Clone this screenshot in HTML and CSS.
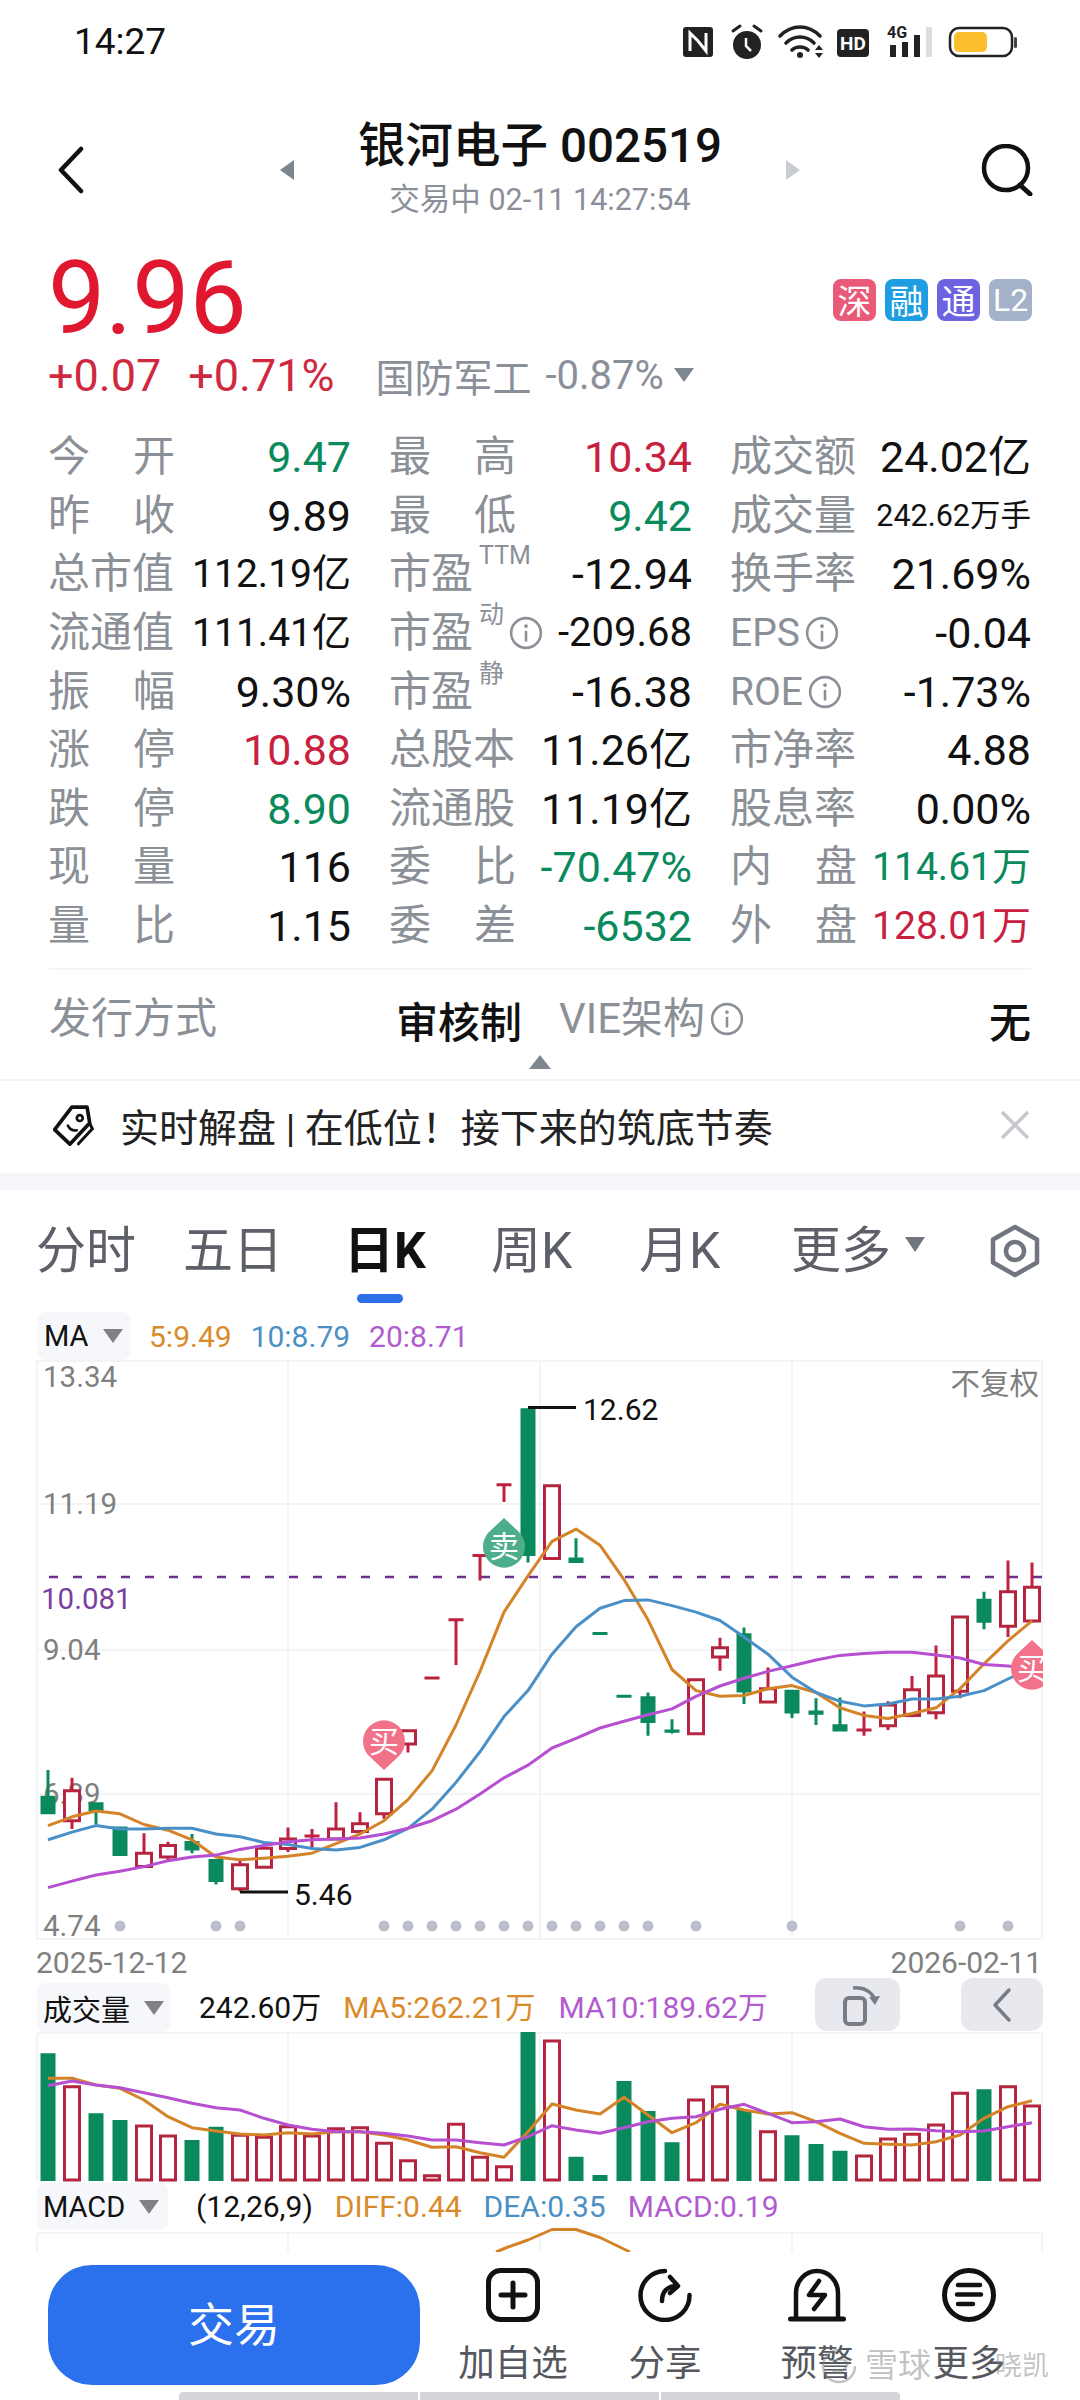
FILE: index.html
```html
<!DOCTYPE html>
<html lang="zh-CN">
<head>
  <meta charset="UTF-8">
  <title>银河电子 002519</title>
  <link rel="stylesheet" href="styles.css">
</head>
<body>
  <svg class="defs" width="0" height="0">
    <symbol id="info" viewBox="0 0 32 32">
      <circle cx="16" cy="16" r="14" fill="none" stroke="currentColor" stroke-width="2.4"/>
      <circle cx="16" cy="9.5" r="1.8" fill="currentColor"/>
      <path d="M16 14v10" stroke="currentColor" stroke-width="2.4"/>
    </symbol>
  </svg>

  <div class="status">
    <span class="status-time">14:27</span>
    <svg class="status-icons" viewBox="683 22 335 40" width="335" height="40">
      <rect x="683" y="27" width="30" height="30" rx="3" fill="#222"/>
      <path d="M690 51V33l8 8 8 10V33" fill="none" stroke="#fff" stroke-width="3"/>
      <circle cx="747" cy="45" r="14" fill="#222"/>
      <path d="M733 31l7-5M761 31l-7-5" stroke="#222" stroke-width="3" stroke-linecap="round"/>
      <path d="M746 38v8l5 5" fill="none" stroke="#fff" stroke-width="2.5"/>
      <path d="M780 36c12-12 28-12 40 0M786 43c8-8 20-8 28 0M792 50c4-4 12-4 16 0" fill="none" stroke="#222" stroke-width="3.6" stroke-linecap="round"/>
      <circle cx="800" cy="55" r="3" fill="#222"/>
      <path d="M815 50l4-5 4 5zM815 53h8l-4 5z" fill="#222"/>
      <rect x="837" y="29" width="32" height="28" rx="4" fill="#222"/>
      <text class="status-hd" x="853" y="50" text-anchor="middle">HD</text>
      <text class="status-4g" x="887" y="38">4G</text>
      <path d="M890 45h6v12h-6zM902 42h6v15h-6zM914 35h6v22h-6z" fill="#222"/>
      <rect x="926" y="27" width="6" height="30" fill="#ddd"/>
      <rect x="950" y="28" width="62" height="28" rx="9" fill="none" stroke="#222" stroke-width="2.5"/>
      <rect x="954" y="32" width="33" height="20" rx="5" fill="#fbbf2d"/>
      <rect x="1014" y="37" width="3" height="11" rx="1.5" fill="#444"/>
    </svg>
  </div>

  <div class="nav">
    <svg class="nav-back" viewBox="0 0 27 48" width="27" height="48">
      <path d="M24 3L4 24l20 21" fill="none" stroke="#111" stroke-width="4.5" stroke-linecap="round" stroke-linejoin="round"/>
    </svg>
    <div class="nav-center">
      <span class="tri-left"></span>
      <div class="nav-title">
        <div class="title">银河电子 002519</div>
        <div class="subtitle">交易中 02-11 14:27:54</div>
      </div>
      <span class="tri-right"></span>
    </div>
    <svg class="nav-search" viewBox="0 0 54 52" width="54" height="52">
      <circle cx="26" cy="24" r="22" fill="none" stroke="#111" stroke-width="4.5"/>
      <path d="M40 41l10 9" stroke="#111" stroke-width="5" stroke-linecap="round"/>
    </svg>
  </div>

  <div class="quote">
    <div class="price">9.96</div>
    <div class="tags">
      <span class="tag tag-shen">深</span>
      <span class="tag tag-rong">融</span>
      <span class="tag tag-tong">通</span>
      <span class="tag tag-l2">L2</span>
    </div>
  </div>
  <div class="change">
    <span class="change-num">+0.07</span>
    <span class="change-num">+0.71%</span>
    <span class="sector">国防军工</span>
    <span class="sector-pct">-0.87%</span>
    <span class="sector-tri"></span>
  </div>

  <div class="stats">
    <div class="cell"><span class="lbl lbl-just">今 开</span><span class="val green">9.47</span></div>
    <div class="cell"><span class="lbl lbl-just">最 高</span><span class="val red">10.34</span></div>
    <div class="cell"><span class="lbl">成交额</span><span class="val">24.02亿</span></div>

    <div class="cell"><span class="lbl lbl-just">昨 收</span><span class="val">9.89</span></div>
    <div class="cell"><span class="lbl lbl-just">最 低</span><span class="val green">9.42</span></div>
    <div class="cell"><span class="lbl">成交量</span><span class="val val-xs">242.62万手</span></div>

    <div class="cell"><span class="lbl">总市值</span><span class="val val-sm">112.19亿</span></div>
    <div class="cell"><span class="lbl">市盈<sup>TTM</sup></span><span class="val">-12.94</span></div>
    <div class="cell"><span class="lbl">换手率</span><span class="val">21.69%</span></div>

    <div class="cell"><span class="lbl">流通值</span><span class="val val-sm">111.41亿</span></div>
    <div class="cell"><span class="lbl">市盈<sup>动</sup></span><svg class="info"><use href="#info"/></svg><span class="val val-md">-209.68</span></div>
    <div class="cell"><span class="lbl lbl-en">EPS</span><svg class="info"><use href="#info"/></svg><span class="val">-0.04</span></div>

    <div class="cell"><span class="lbl lbl-just">振 幅</span><span class="val">9.30%</span></div>
    <div class="cell"><span class="lbl">市盈<sup>静</sup></span><span class="val">-16.38</span></div>
    <div class="cell"><span class="lbl lbl-en">ROE</span><svg class="info"><use href="#info"/></svg><span class="val">-1.73%</span></div>

    <div class="cell"><span class="lbl lbl-just">涨 停</span><span class="val red">10.88</span></div>
    <div class="cell"><span class="lbl">总股本</span><span class="val">11.26亿</span></div>
    <div class="cell"><span class="lbl">市净率</span><span class="val">4.88</span></div>

    <div class="cell"><span class="lbl lbl-just">跌 停</span><span class="val green">8.90</span></div>
    <div class="cell"><span class="lbl">流通股</span><span class="val">11.19亿</span></div>
    <div class="cell"><span class="lbl">股息率</span><span class="val">0.00%</span></div>

    <div class="cell"><span class="lbl lbl-just">现 量</span><span class="val">116</span></div>
    <div class="cell"><span class="lbl lbl-just">委 比</span><span class="val green">-70.47%</span></div>
    <div class="cell"><span class="lbl lbl-just">内 盘</span><span class="val val-sm green">114.61万</span></div>

    <div class="cell"><span class="lbl lbl-just">量 比</span><span class="val">1.15</span></div>
    <div class="cell"><span class="lbl lbl-just">委 差</span><span class="val green">-6532</span></div>
    <div class="cell"><span class="lbl lbl-just">外 盘</span><span class="val val-sm red">128.01万</span></div>
  </div>

  <div class="issue">
    <div class="issue-row">
      <span class="lbl issue-name">发行方式</span>
      <span class="issue-val">审核制</span>
      <span class="lbl issue-vie">VIE架构</span>
      <svg class="info"><use href="#info"/></svg>
      <span class="issue-val issue-none">无</span>
    </div>
    <span class="issue-arrow"></span>
  </div>

  <div class="news">
    <svg class="news-icon" viewBox="60 40 130 135" width="43" height="45">
      <path d="M120 52h46l8 48-60 64-46-44z" fill="none" stroke="#111" stroke-width="11" stroke-linejoin="round"/>
      <path d="M176 105l6 12-42 46" fill="none" stroke="#111" stroke-width="9" stroke-linecap="round"/>
      <circle cx="144" cy="85" r="9" fill="none" stroke="#111" stroke-width="8"/>
      <path d="M108 108c6 12 16 16 27 14" fill="none" stroke="#111" stroke-width="8" stroke-linecap="round"/>
    </svg>
    <span class="news-text">实时解盘 | 在低位！接下来的筑底节奏</span>
    <svg class="news-close" viewBox="0 0 30 30" width="30" height="30">
      <path d="M2 2l26 26M28 2L2 28" stroke="#c5c9cf" stroke-width="3.6"/>
    </svg>
  </div>

  <div class="tabs">
    <span class="tab">分时</span>
    <span class="tab">五日</span>
    <span class="tab tab-active">日K</span>
    <span class="tab">周K</span>
    <span class="tab">月K</span>
    <span class="tab tab-more">更多<i class="tab-tri"></i></span>
    <svg class="tab-gear" viewBox="0 0 52 54" width="52" height="54">
      <path d="M26 3l22 12.5v23L26 51 4 38.5v-23z" fill="none" stroke="#71757f" stroke-width="4.5" stroke-linejoin="round"/>
      <circle cx="26" cy="27" r="9" fill="none" stroke="#71757f" stroke-width="4.5"/>
    </svg>
  </div>

  <div class="legend legend-ma">
    <span class="chip chip-ma">MA<i class="chip-tri"></i></span>
    <span class="c-orange">5:9.49</span>
    <span class="c-blue">10:8.79</span>
    <span class="c-purple">20:8.71</span>
  </div>

  <svg class="chart" viewBox="0 1360 1080 580" width="1080" height="580">
    <defs><clipPath id="chart-clip"><rect x="37" y="1360" width="1006" height="580"/></clipPath></defs>
    <path class="grid" d="M37 1361H1042V1939H37ZM288 1361V1939M540 1361V1939M792 1361V1939M37 1504H1042M37 1650H1042M37 1794H1042"/>
    <text class="axis" x="43" y="1387">13.34</text>
    <text class="axis" x="43" y="1514">11.19</text>
    <text class="axis" x="43" y="1660">9.04</text>
    <text class="axis" x="43" y="1804">6.89</text>
    <text class="axis" x="43" y="1936">4.74</text>
    <text class="axis axis-avg" x="41" y="1609">10.081</text>
    <text class="axis" x="1039" y="1394" text-anchor="end">不复权</text>

    <path class="dash" d="M49 1577H1043"/>

    <path class="wick-g" d="M48 1770V1796M96 1811V1824.5M192 1834V1853.2M216 1881V1884.6M528 1555V1562.4M576 1538.3V1558M648 1692.5V1735.7M672 1719.3V1733.4M744 1627.4V1704M792 1713V1718.1M816 1698.2V1725M840 1697.4V1725M984 1591.8V1629.3M592.5 1633.5h15M616.5 1696.3h15"/>
    <path class="body-g" d="M40.5 1795.8h15v18.4h-15zM88.5 1802.3h15v8.7h-15zM112.5 1826.4h15v29.5h-15zM184.5 1840.9h15v9.6h-15zM208.5 1858.9h15v23h-15zM520.5 1408.2h15v147.7h-15zM568.5 1557.4h15v5.7h-15zM640.5 1696.3h15v26.8h-15zM664.5 1729.6h15v3.1h-15zM736.5 1633.2h15v59.3h-15zM784.5 1689.8h15v23.7h-15zM808.5 1710.5h15v4.2h-15zM832.5 1724.2h15v7.3h-15zM976.5 1598.7h15v24.1h-15z"/>
    <path class="wick-r" d="M72 1777.8V1829.1M144 1833.3V1853M168 1841.7V1860.8M240 1860.8V1891.5M288 1827.5V1852M312 1829.1V1847.4M336 1802.3V1839.8M360 1812.2V1832.9M384 1813.8V1818.7M408 1744V1752.6M456 1619.8V1664.9M480 1555.5V1580.4M504 1484.7V1501.9M720 1637.8V1670.7M768 1667.6V1689M864 1711.6V1735.7M888 1701.3V1730M912 1676V1717.3M936 1645.4V1719.3M960 1691V1698.2M1008 1560.5V1637M1032 1562.4V1622.4M304.5 1836h15M424.5 1677.9h15M448.5 1619.8h15M472.5 1555.5h15M496.5 1484.7h15M856.5 1730h15"/>
    <path class="body-r" d="M64.5 1790.8h15v29.9h-15zM136.5 1853.2h15v13.4h-15zM160.5 1845.5h15v11.5h-15zM232.5 1864.7h15v24.1h-15zM256.5 1848.2h15v19.1h-15zM280.5 1839h15v9.6h-15zM328.5 1829.1h15v9.9h-15zM352.5 1823.7h15v7.7h-15zM376.5 1779.3h15v34.5h-15zM400.5 1730.7h15v13.4h-15zM544.5 1485.8h15v72.7h-15zM688.5 1679.8h15v54h-15zM712.5 1647.7h15v9.2h-15zM760.5 1688.7h15v13.3h-15zM880.5 1705.1h15v20.7h-15zM904.5 1689.8h15v25.6h-15zM928.5 1676h15v36.8h-15zM952.5 1617.1h15v74.2h-15zM1000.5 1591.8h15v34.5h-15zM1024.5 1587.2h15v33.7h-15z"/>

    <polyline class="line-orange" points="48,1825.6 72,1816.8 96,1811 120,1813.8 144,1824.5 168,1830.2 192,1839.8 216,1857 240,1859.7 264,1858.2 288,1856.2 312,1853.2 336,1843.6 360,1834 384,1820.7 408,1799.6 432,1770.9 456,1725 480,1671.4 504,1612.1 528,1575.8 552,1541.3 576,1529.1 600,1545.2 624,1579.6 648,1619.8 672,1669.5 696,1690.6 720,1696.3 744,1695.5 768,1688.7 792,1685.6 816,1692.5 840,1707.8 864,1715.4 888,1718.5 912,1713.5 936,1707.8 960,1688.7 984,1663.8 1008,1640.8 1032,1620.9"/>
    <polyline class="line-blue" points="48,1839.8 72,1832.1 96,1825.6 120,1829.1 144,1829.1 168,1828.3 192,1828.3 216,1834 240,1836.7 264,1842.5 288,1844.4 312,1848.6 336,1850.1 360,1847.4 384,1839.8 408,1828.3 432,1809.2 456,1782.4 480,1751.8 504,1716.6 528,1690.6 552,1654.2 576,1626.7 600,1608.3 624,1600.6 648,1599.9 672,1605.6 696,1612.1 720,1620.5 744,1637 768,1654.2 792,1677.2 816,1692.5 840,1701.3 864,1705.9 888,1704 912,1699 936,1699 960,1696.3 984,1690.6 1008,1679 1032,1667.6"/>
    <polyline class="line-purple" points="48,1887.6 72,1881.1 96,1875 120,1871.2 144,1866.6 168,1860.8 192,1857 216,1855.1 240,1849.4 264,1845.5 288,1841.7 312,1839.8 336,1839 360,1837.9 384,1834 408,1828.3 432,1820.7 456,1809.2 480,1793.9 504,1777.8 528,1765.2 552,1748 576,1738.4 600,1728 624,1721.2 648,1714.7 672,1708.9 696,1696.3 720,1686 744,1678.3 768,1671.4 792,1665.7 816,1660 840,1655.4 864,1653.4 888,1652.3 912,1652.3 936,1655 960,1658 984,1664.5 1008,1666 1032,1668.4"/>

    <path class="mark-line" d="M528 1407.5H576M240 1892H288"/>
    <text class="mark-num" x="583" y="1420">12.62</text>
    <text class="mark-num" x="294" y="1905">5.46</text>

    <g class="dots">
      <circle cx="120" cy="1926" r="5.5"/><circle cx="216" cy="1926" r="5.5"/><circle cx="240" cy="1926" r="5.5"/>
      <circle cx="384" cy="1926" r="5.5"/><circle cx="408" cy="1926" r="5.5"/><circle cx="432" cy="1926" r="5.5"/>
      <circle cx="456" cy="1926" r="5.5"/><circle cx="480" cy="1926" r="5.5"/><circle cx="504" cy="1926" r="5.5"/>
      <circle cx="528" cy="1926" r="5.5"/><circle cx="552" cy="1926" r="5.5"/><circle cx="576" cy="1926" r="5.5"/>
      <circle cx="600" cy="1926" r="5.5"/><circle cx="624" cy="1926" r="5.5"/><circle cx="648" cy="1926" r="5.5"/>
      <circle cx="696" cy="1926" r="5.5"/><circle cx="792" cy="1926" r="5.5"/><circle cx="960" cy="1926" r="5.5"/>
      <circle cx="1008" cy="1926" r="5.5"/>
    </g>

    <path class="pin-buy" d="M384 1770l-15-14a21 21 0 1 1 30 0z"/>
    <text class="pin-text" x="384" y="1752">买</text>
    <path class="pin-sell" d="M504 1518l15 14a21 21 0 1 1-30 0z"/>
    <text class="pin-text" x="504" y="1557">卖</text>
    <g clip-path="url(#chart-clip)">
      <path class="pin-buy" d="M1032 1640l15 14a21 21 0 1 1-30 0z"/>
      <text class="pin-text" x="1032" y="1679">买</text>
    </g>
  </svg>

  <div class="dates"><span>2025-12-12</span><span>2026-02-11</span></div>

  <div class="legend legend-vol">
    <span class="chip chip-vol">成交量<i class="chip-tri"></i></span>
    <span class="vol-now">242.60万</span>
    <span class="c-orange vol-ma5">MA5:262.21万</span>
    <span class="c-purple">MA10:189.62万</span>
    <span class="side-btn side-rotate">
      <svg viewBox="0 0 44 44" width="44" height="44">
        <rect x="9" y="15" width="20" height="26" rx="4" fill="none" stroke="#7a7c85" stroke-width="4"/>
        <path d="M17 5c11-1 20 4 22 13" fill="none" stroke="#7a7c85" stroke-width="3.5"/>
        <path d="M33 14l6 8 5-9z" fill="#7a7c85"/>
      </svg>
    </span>
    <span class="side-btn side-fold">
      <svg viewBox="0 0 22 36" width="22" height="36">
        <path d="M18 3L4 18l14 15" fill="none" stroke="#7a7c85" stroke-width="3.5" stroke-linecap="round" stroke-linejoin="round"/>
      </svg>
    </span>
  </div>

  <svg class="chart" viewBox="0 2032 1080 149" width="1080" height="149">
    <path class="grid" d="M37 2033H1042M37 2033V2181M288 2033V2181M540 2033V2181M792 2033V2181M1042 2033V2181"/>
    <path class="body-g" d="M40.5 2053.3h15V2181h-15zM88.5 2113.3h15V2181h-15zM112.5 2120h15V2181h-15zM184.5 2140h15V2181h-15zM208.5 2126.7h15V2181h-15zM520.5 2032h15V2181h-15zM568.5 2156.7h15V2181h-15zM592.5 2175h15V2181h-15zM616.5 2081h15V2181h-15zM640.5 2111h15V2181h-15zM664.5 2142.3h15V2181h-15zM736.5 2110h15V2181h-15zM784.5 2135.3h15V2181h-15zM808.5 2144h15V2181h-15zM832.5 2150.7h15V2181h-15zM976.5 2089.3h15V2181h-15z"/>
    <path class="body-r" d="M64.5 2086.7h15V2180h-15zM136.5 2126h15V2180h-15zM160.5 2136h15V2180h-15zM232.5 2135.3h15V2180h-15zM256.5 2137.3h15V2180h-15zM280.5 2126.7h15V2180h-15zM304.5 2136h15V2180h-15zM328.5 2128.7h15V2180h-15zM352.5 2127.7h15V2180h-15zM376.5 2143.3h15V2180h-15zM400.5 2160.7h15V2180h-15zM424.5 2175.7h15V2180h-15zM448.5 2124.3h15V2180h-15zM472.5 2157.3h15V2180h-15zM496.5 2166.7h15V2180h-15zM544.5 2041h15V2180h-15zM688.5 2100h15V2180h-15zM712.5 2086.7h15V2180h-15zM760.5 2131.7h15V2180h-15zM856.5 2156h15V2180h-15zM880.5 2139h15V2180h-15zM904.5 2134.3h15V2180h-15zM928.5 2125h15V2180h-15zM952.5 2093.3h15V2180h-15zM1000.5 2086.7h15V2180h-15zM1024.5 2106h15V2180h-15z"/>
    <polyline class="line-orange" points="48,2078.3 72,2078.3 96,2085 120,2088.3 144,2100 168,2116.7 192,2127.7 216,2131 240,2134 264,2135 288,2132.7 312,2134 336,2131.7 360,2131.7 384,2135 408,2140 432,2147.3 456,2146.7 480,2152.7 504,2157.3 528,2131.7 552,2104 576,2110 600,2114 624,2097.3 648,2115 672,2132.7 696,2122.7 720,2104.3 744,2110 768,2114 792,2112.7 816,2121.7 840,2133.3 864,2143.3 888,2144.3 912,2145 936,2141.7 960,2135 984,2118.3 1008,2106.7 1032,2100.7"/>
    <polyline class="line-purple" points="48,2085.7 72,2081 96,2085 120,2087.7 144,2092.7 168,2097.7 192,2103.3 216,2107.7 240,2110 264,2118.3 288,2125 312,2129.3 336,2131.7 360,2131.7 384,2133.3 408,2136 432,2140 456,2140 480,2142.7 504,2145 528,2136.7 552,2125.7 576,2130 600,2133.3 624,2127.7 648,2121.7 672,2118.3 696,2116.7 720,2109.3 744,2104.3 768,2113.3 792,2122.7 816,2121.7 840,2119 864,2126.7 888,2129.3 912,2129 936,2130.7 960,2131.7 984,2131 1008,2126.7 1032,2122.7"/>
  </svg>

  <div class="legend legend-macd">
    <span class="chip chip-macd">MACD<i class="chip-tri"></i></span>
    <span class="macd-args">(12,26,9)</span>
    <span class="c-orange">DIFF:0.44</span>
    <span class="c-blue">DEA:0.35</span>
    <span class="c-purple">MACD:0.19</span>
  </div>

  <svg class="chart" viewBox="0 2232 1080 20" width="1080" height="20">
    <path class="grid" d="M37 2233H1042M37 2233V2252M288 2233V2252M540 2233V2252M792 2233V2252M1042 2233V2252"/>
    <polyline class="line-orange" points="496,2252 508,2247 528,2240 552,2229.5 576,2229.5 600,2237.5 630,2252"/>
  </svg>

  <div class="bottom">
    <div class="trade">交易</div>
    <div class="actions">
      <div class="action">
        <svg viewBox="0 0 54 54" width="54" height="54">
          <rect x="2.5" y="2.5" width="49" height="49" rx="12" fill="none" stroke="#111" stroke-width="5"/>
          <path d="M15 27h24M27 15v24" stroke="#111" stroke-width="5" stroke-linecap="round"/>
        </svg>
        <span>加自选</span>
      </div>
      <div class="action">
        <svg viewBox="0 0 54 54" width="54" height="54">
          <path d="M27 3A24.5 24.5 0 1 0 51.5 27" fill="none" stroke="#111" stroke-width="4.5" stroke-linecap="round"/>
          <path d="M24 33c0-9 5-15 15-15M32 9l8 9-8 7" fill="none" stroke="#111" stroke-width="4.5" stroke-linecap="round" stroke-linejoin="round"/>
        </svg>
        <span>分享</span>
      </div>
      <div class="action">
        <svg viewBox="0 0 58 54" width="58" height="54">
          <path d="M2.5 51H55.5" stroke="#111" stroke-width="5" stroke-linecap="round"/>
          <path d="M8 50V25a21 22 0 0 1 42 0v25" fill="none" stroke="#111" stroke-width="4.5"/>
          <path d="M31 13L21 27h16L26 41" fill="none" stroke="#111" stroke-width="4.5" stroke-linecap="round" stroke-linejoin="round"/>
        </svg>
        <span>预警</span>
      </div>
      <div class="action">
        <svg viewBox="0 0 54 54" width="54" height="54">
          <circle cx="27" cy="27" r="24.5" fill="none" stroke="#111" stroke-width="5"/>
          <path d="M16 17h22M15 26.5h24M16 36h15" stroke="#111" stroke-width="4.5" stroke-linecap="round"/>
        </svg>
        <span>更多</span>
      </div>
    </div>
    <div class="watermark">
      <svg viewBox="0 0 36 36" width="36" height="36">
        <path d="M18 2a16 16 0 1 0 16 16" fill="none" stroke="currentColor" stroke-width="2.5"/>
        <path d="M10 16c5-6 12-6 17-1-3 8-9 11-15 8" fill="none" stroke="currentColor" stroke-width="2.5"/>
      </svg>
      <span class="wm-name">雪球</span>
      <span class="wm-user">晓凯</span>
    </div>
    <div class="home-bar"><i></i><i></i><i></i></div>
  </div>
</body>
</html>
```

FILE: styles.css
```css
* { box-sizing: border-box; }
html, body { margin: 0; padding: 0; }
body { width: 1080px; height: 2400px; overflow: hidden; background: #fff; color: #111; font-family: Roboto, "Noto Sans CJK SC", sans-serif; }
i { font-style: normal; }
.defs { position: absolute; }

.status { display: flex; align-items: center; justify-content: space-between; height: 84px; padding: 0 62px 0 74px; }
.status-time { font-size: 37px; line-height: 84px; }
.status-icons { display: block; margin-top: -1px; }
.status-hd { font-size: 19px; font-weight: 700; fill: #fff; }
.status-4g { font-size: 16px; font-weight: 700; fill: #222; }

.nav { display: grid; grid-template-columns: 1fr auto 1fr; align-items: center; height: 140px; padding: 32px 46px 6px; }
.nav-back { margin-left: 11px; }
.nav-search { justify-self: end; }
.nav-center { display: flex; align-items: center; gap: 64px; }
.nav-title { text-align: center; }
.title { font-size: 47.5px; font-weight: 500; line-height: 60px; white-space: nowrap; }
.subtitle { font-size: 30.5px; line-height: 48px; color: #8a8f99; white-space: nowrap; }
.tri-left, .tri-right { width: 0; height: 0; border-style: solid; border-width: 10px 0 10px 14px; border-color: transparent; }
.tri-left { border-width: 10px 14px 10px 0; border-right-color: #7a8590; }
.tri-right { border-left-color: #c8cdd5; }

.quote { display: flex; align-items: center; justify-content: space-between; height: 126px; padding: 21px 48px 0 48px; }
.price { font-size: 102px; line-height: 100px; color: #e0182f; }
.tags { display: flex; gap: 9px; margin-top: 4px; }
.tag { display: flex; align-items: center; justify-content: center; width: 43px; height: 42px; border-radius: 8px; font-size: 34px; color: #fff; }
.tag-shen { background: #e85a78; }
.tag-rong { background: #1d9ee3; }
.tag-tong { background: #6c63e0; }
.tag-l2 { background: #a3b1c9; font-size: 32px; }

.change { display: flex; align-items: center; height: 50px; padding-left: 48px; }
.change-num { font-size: 45px; color: #d0293f; margin-right: 27px; }
.sector { font-size: 39px; color: #8a8f99; margin-left: 14px; }
.sector-pct { font-size: 40px; color: #8a8f99; margin-left: 14px; }
.sector-tri { width: 0; height: 0; margin-left: 10px; border-style: solid; border-width: 14px 10px 0; border-color: #7f8790 transparent transparent; }

.stats { display: grid; grid-template-columns: 303px 303px 301px; grid-auto-rows: 58.6px; column-gap: 38px; padding: 28px 48px 0; height: 568px; }
.cell { display: flex; align-items: center; min-width: 0; }
.lbl { font-size: 42px; line-height: 58px; color: #8b9097; white-space: nowrap; }
.lbl-just { width: 127px; text-align-last: justify; }
.lbl sup { font-size: 25px; line-height: 0; vertical-align: 24px; margin-left: 6px; }
.lbl-en { font-size: 39px; }
.info { width: 34px; height: 34px; margin-left: 5px; color: #8b9097; flex: none; }
.val { margin-left: auto; font-size: 43px; line-height: 58px; white-space: nowrap; color: #111; }
.val-md { font-size: 40px; }
.val-sm { font-size: 39px; }
.val-xs { font-size: 30.5px; }
.red { color: #c8213f; }
.green { color: #0a8a5c; }

.issue { display: flex; flex-direction: column; align-items: center; height: 111px; margin: 0 49px; padding-top: 19px; border-top: 2px solid #f3f4f6; }
.issue-row { display: flex; align-items: center; width: 100%; height: 60px; }
.issue-name { width: 347px; }
.issue-val { font-size: 42px; font-weight: 500; color: #111; }
.issue-vie { margin-left: 37px; }
.issue-none { margin-left: auto; }
.issue-arrow { width: 0; height: 0; margin-top: 6px; border-style: solid; border-width: 0 11px 14px; border-color: transparent transparent #7f8790; }

.news { display: flex; align-items: center; height: 111px; padding: 0 50px 4px 52px; border-top: 2px solid #f3f4f6; border-bottom: 17px solid #f5f6fa; }
.news-text { font-size: 39px; color: #222; margin-left: 25px; white-space: nowrap; }
.news-close { margin-left: auto; }

.tabs { display: grid; grid-template-columns: 147px 161px 147px 148px 152px auto 1fr; align-items: center; height: 122px; padding: 0 39px 0 36px; }
.tab { position: relative; font-size: 50px; line-height: 122px; color: #5d6068; white-space: nowrap; }
.tab-active { font-weight: 700; color: #111; }
.tab-active::after { content: ""; position: absolute; left: 13px; bottom: 9px; width: 46px; height: 9px; border-radius: 5px; background: #2d6fe6; }
.tab-tri { display: inline-block; width: 0; height: 0; margin-left: 14px; vertical-align: 16px; border-style: solid; border-width: 15px 10px 0; border-color: #71757f transparent transparent; }
.tab-gear { justify-self: end; }

.legend { display: flex; align-items: center; font-size: 30px; white-space: nowrap; }
.legend-ma { height: 48px; padding-left: 38px; gap: 19px; }
.legend-ma .chip { width: 92px; height: 48px; }
.chip { display: flex; align-items: center; padding-left: 6px; background: #f6f7fb; border-radius: 8px; color: #111; font-size: 29px; }
.chip-tri { width: 0; height: 0; margin-left: 14px; border-style: solid; border-width: 14px 10px 0; border-color: #7f8186 transparent transparent; }
.c-orange { color: #d98b2b; }
.c-blue { color: #4a90c4; }
.c-purple { color: #b15bcf; }

.chart { display: block; overflow: visible; }
.grid { fill: none; stroke: #f3f4f6; stroke-width: 2; }
.axis { font-size: 29.5px; fill: #808080; }
.axis-avg { fill: #7a3f9e; }
.dash { stroke: #6d2f91; stroke-width: 2.5; stroke-dasharray: 9 15; }
.wick-g { fill: none; stroke: #0a8a5c; stroke-width: 3; }
.wick-r { fill: none; stroke: #c0203f; stroke-width: 3; }
.body-g { fill: #0a8a5c; }
.body-r { fill: #fff; stroke: #b5253f; stroke-width: 3; }
polyline { fill: none; stroke-width: 3; stroke-linejoin: round; }
.line-orange { stroke: #d58328; }
.line-blue { stroke: #4a90c8; }
.line-purple { stroke: #b64fd0; }
.mark-line { stroke: #111; stroke-width: 3; fill: none; }
.mark-num { font-size: 30px; fill: #111; }
.dots { fill: #b9bdcc; }
.pin-buy { fill: #f2728a; }
.pin-sell { fill: #4cae8b; }
.pin-text { font-size: 30px; fill: #fff; text-anchor: middle; }

.dates { display: flex; justify-content: space-between; height: 37px; padding: 5px 38px 0 36px; font-size: 30px; line-height: 36px; color: #808080; }

.legend-vol { height: 55px; padding: 0 37px; }
.chip-vol { width: 133px; height: 49px; margin-top: 6px; }
.vol-now { margin-left: 29px; color: #111; }
.vol-ma5 { margin: 0 23px 0 22px; }
.side-btn { display: flex; align-items: center; justify-content: center; height: 53px; border-radius: 12px; background: #e8e9ef; }
.side-rotate { width: 85px; margin-left: auto; }
.side-fold { width: 82px; margin-left: 61px; }

.legend-macd { height: 51px; padding-left: 37px; gap: 22px; }
.chip-macd { width: 131px; height: 47px; }
.macd-args { margin-left: 6px; color: #111; }

.bottom { position: relative; display: flex; height: 148px; background: #fff; }
.trade { width: 372px; height: 120px; margin: 13px 0 0 48px; border-radius: 44px; background: #2b70ec; color: #fff; font-size: 46px; line-height: 120px; text-align: center; }
.actions { display: grid; grid-template-columns: repeat(4, 152px); margin-left: 17px; }
.action { display: flex; flex-direction: column; align-items: center; padding-top: 16px; }
.action span { margin-top: 17px; font-size: 36.5px; line-height: 50px; color: #55585f; }
.watermark { position: absolute; left: 821px; top: 94px; display: flex; align-items: center; gap: 8px; color: rgba(120, 120, 120, .45); font-size: 33px; line-height: 40px; }
.wm-user { margin-left: 56px; font-size: 27px; }
.home-bar { position: absolute; left: 179px; bottom: 0; display: flex; gap: 2px; }
.home-bar i { width: 239px; height: 8px; background: #d5d6dc; }
.home-bar i:first-child { border-radius: 4px 0 0 0; }
.home-bar i:last-child { border-radius: 0 4px 0 0; }
```
